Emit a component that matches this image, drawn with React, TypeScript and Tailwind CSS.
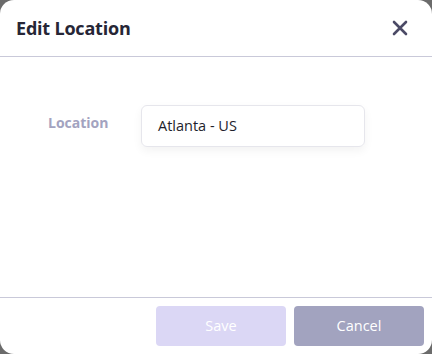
import React from "react";

export default function App() {
  return (
    <div className="w-[432px] h-[354px] bg-[#6b6b6b] overflow-hidden" style={{ fontFamily: '"Open Sans", "Noto Sans", sans-serif' }}>
      <div className="w-[432px] h-[354px] bg-white rounded-[14px] flex flex-col">
        <div className="h-[57px] flex items-center justify-between pl-4 pr-[24px] border-b border-[#c9c9d9]">
          <h2 className="text-[18px] font-bold text-[#262636] tracking-[-0.2px]">Edit Location</h2>
          <svg width="16" height="16" viewBox="0 0 16 16" fill="none">
            <path d="M2 2L14 14M14 2L2 14" stroke="#4b4a66" strokeWidth="2.6" strokeLinecap="round" />
          </svg>
        </div>
        <div className="flex-1 flex items-start pt-[48px] pl-[48px]">
          <span className="w-[93px] text-[14px] font-bold text-[#a3a3c0] mt-[7px]">Location</span>
          <div className="w-[224px] h-[42px] flex items-center px-4 border border-[#e6e6ec] rounded-[6px] shadow-[0_4px_10px_rgba(0,0,0,0.05)] text-[14.5px] text-[#1e1e2c]">
            Atlanta - US
          </div>
        </div>
        <div className="h-[57px] border-t border-[#c9c9d9] flex items-start justify-end gap-2 pt-[8px] pr-2">
          <button className="w-[130px] h-[40px] rounded-[4px] bg-[#dbd7f5] text-white text-[14.5px]">Save</button>
          <button className="w-[130px] h-[40px] rounded-[4px] bg-[#a2a3bf] text-white text-[14.5px]">Cancel</button>
        </div>
      </div>
    </div>
  );
}
